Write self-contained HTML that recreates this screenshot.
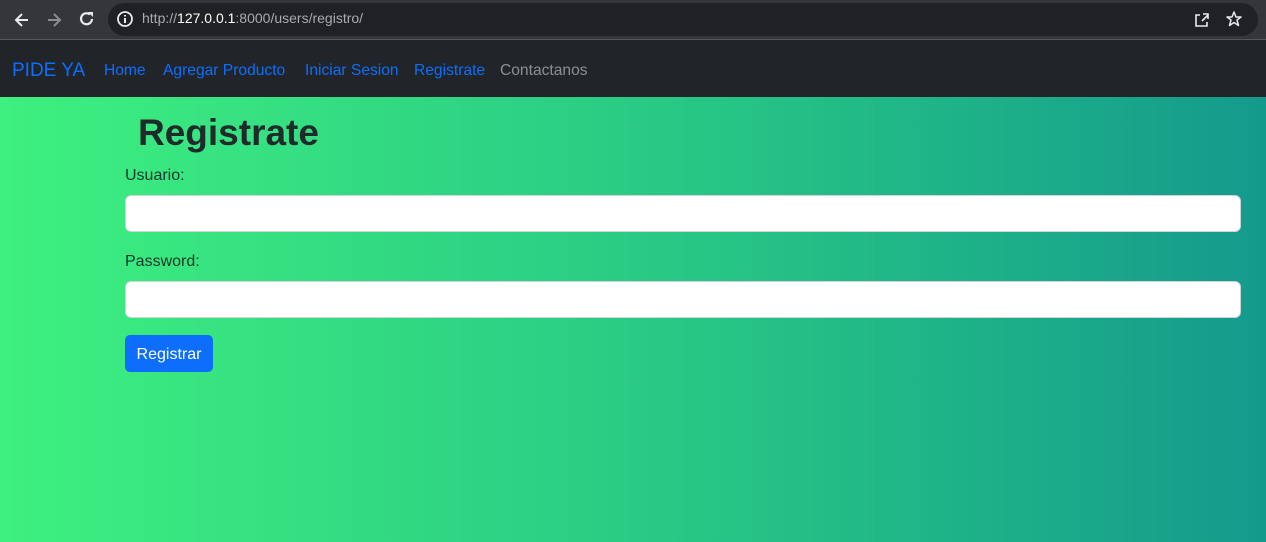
<!DOCTYPE html>
<html><head><meta charset="utf-8"><style>
*{box-sizing:border-box;margin:0;padding:0}
body{width:1266px;height:542px;overflow:hidden;font-family:"Liberation Sans",sans-serif;background:#202124}
.chrome{position:absolute;top:0;left:0;width:1266px;height:40px;background:#35363a;border-bottom:1px solid #55575c}
.pill{position:absolute;left:108px;top:3px;width:1150px;height:33px;border-radius:17px;background:#202124}
.url{position:absolute;left:142px;top:10px;font-size:14px;color:#a8abb0}
.url b{color:#fff;font-weight:normal}
.nav{position:absolute;top:40px;left:0;width:1266px;height:57px;background:#212529}
.nav span{position:absolute;top:22px;font-size:15.6px;color:#0d6efd}
.main{position:absolute;top:97px;left:0;width:1266px;height:445px;background:linear-gradient(90deg,#3ef07f 0%,#2ccf84 45%,#21b887 70%,#149a8c 100%)}
h1{position:absolute;left:138px;top:15px;font-size:37px;font-weight:bold;color:#1f2a2b}
label{position:absolute;left:125px;font-size:16px;color:#17382a}
.inp{position:absolute;left:125px;width:1116px;height:37px;background:#fff;border-radius:6px;border:1px solid #ced4da}
.btn{position:absolute;left:125px;top:238px;width:88px;height:37px;background:#0d6efd;border-radius:5px;color:#fff;font-size:16px;text-align:center;line-height:40px}
</style></head><body>
<div class="chrome">
<svg style="position:absolute;left:12px;top:10px" width="20" height="20" viewBox="0 0 20 20"><path d="M16 10H4M10 4L4 10L10 16" stroke="#e8eaed" stroke-width="2" fill="none"/></svg>
<svg style="position:absolute;left:44px;top:10px" width="20" height="20" viewBox="0 0 20 20"><path d="M4 10H16M10 4L16 10L10 16" stroke="#8a8c90" stroke-width="2" fill="none"/></svg>
<svg style="position:absolute;left:77px;top:9px" width="20" height="20" viewBox="0 0 20 20"><path d="M15 10A5.5 5.5 0 1 1 13 5.5" stroke="#e8eaed" stroke-width="2.2" fill="none"/><path d="M11 3H16V8Z" fill="#e8eaed"/></svg>
<div class="pill"></div>
<svg style="position:absolute;left:116px;top:10px" width="18" height="18" viewBox="0 0 18 18"><circle cx="9" cy="9" r="7" stroke="#e8eaed" stroke-width="1.8" fill="none"/><path d="M9 8V13M9 5V6.5" stroke="#e8eaed" stroke-width="2"/></svg>
<div class="url">http://<b>127.0.0.1</b>:8000/users/registro/</div>
<svg style="position:absolute;left:1193px;top:11px" width="18" height="18" viewBox="0 0 18 18"><path d="M7 4H3V15H14V11M9 10L15 4M10 3H15V8" stroke="#e8eaed" stroke-width="1.6" fill="none"/></svg>
<svg style="position:absolute;left:1225px;top:10px" width="18" height="18" viewBox="0 0 18 18"><path d="M9 2L11 7H16L12 10L13.5 15.5L9 12.5L4.5 15.5L6 10L2 7H7Z" stroke="#e8eaed" stroke-width="1.5" fill="none" stroke-linejoin="round"/></svg>
</div>
<div class="nav">
<span style="left:12px;font-size:19px;top:20px">PIDE YA</span>
<span style="left:104px">Home</span>
<span style="left:163px">Agregar Producto</span>
<span style="left:305px">Iniciar Sesion</span>
<span style="left:414px">Registrate</span>
<span style="left:500px;color:#8c8f93">Contactanos</span>
</div>
<div class="main">
<h1>Registrate</h1>
<label style="top:70px">Usuario:</label>
<div class="inp" style="top:98px"></div>
<label style="top:156px">Password:</label>
<div class="inp" style="top:184px"></div>
<div class="btn">Registrar</div>
</div>
</body></html>
